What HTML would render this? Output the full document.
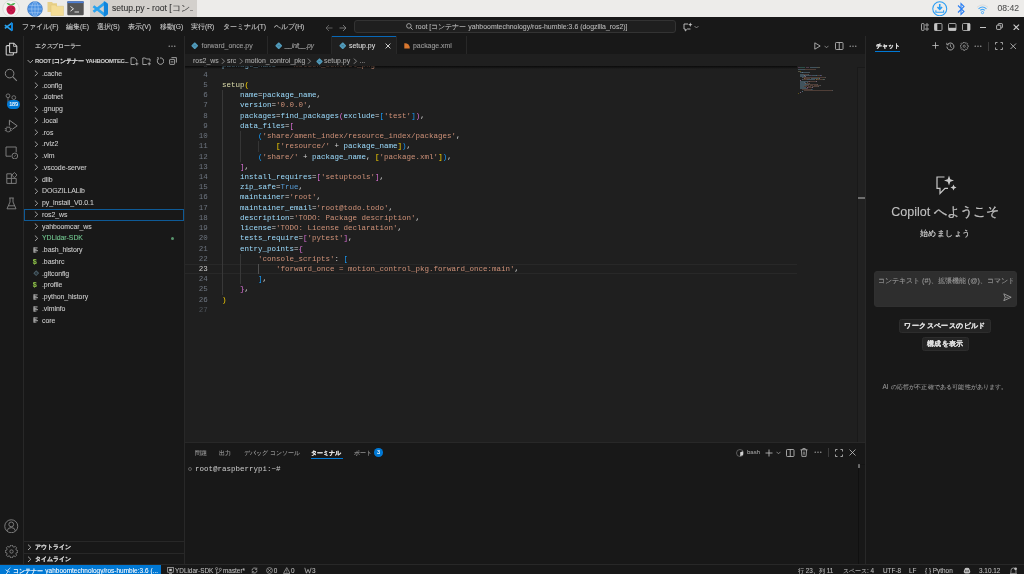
<!DOCTYPE html>
<html lang="ja"><head><meta charset="utf-8"><title>setup.py</title>
<style>
*{margin:0;padding:0;box-sizing:border-box}
html,body{width:1024px;height:574px;overflow:hidden;background:#181818;font-family:"Liberation Sans",sans-serif;color:#ccc}
.a{position:absolute}
.t{position:absolute;white-space:nowrap;-webkit-text-stroke:0.08px currentColor}
.m{position:absolute;white-space:pre;font-family:"Liberation Mono",monospace}
</style></head><body><div id="w" style="position:absolute;left:0;top:0;width:1024px;height:574px;will-change:transform">
<div class="a" style="left:0px;top:0px;width:1024px;height:17px;background:#edecea;"></div>
<div class="a" style="left:90px;top:0px;width:107px;height:17px;background:#d3d0cc;"></div>
<div class="a" style="left:0px;top:17px;width:1024px;height:18.5px;background:#181818;"></div>
<div class="a" style="left:0px;top:35.5px;width:1024px;height:0.8px;background:#282828;"></div>
<div class="a" style="left:0px;top:36px;width:23px;height:528px;background:#181818;"></div>
<div class="a" style="left:23px;top:36px;width:0.8px;height:528px;background:#282828;"></div>
<div class="a" style="left:23.8px;top:36px;width:160.5px;height:528px;background:#181818;"></div>
<div class="a" style="left:184.3px;top:36px;width:0.8px;height:528px;background:#282828;"></div>
<div class="a" style="left:185px;top:36px;width:680px;height:406px;background:#1f1f1f;"></div>
<div class="a" style="left:185px;top:36px;width:680px;height:18px;background:#181818;"></div>
<div class="a" style="left:185px;top:53.5px;width:680px;height:0.8px;background:#282828;"></div>
<div class="a" style="left:185px;top:54.3px;width:680px;height:11.2px;background:#1f1f1f;"></div>
<div class="a" style="left:865px;top:36px;width:159px;height:528px;background:#181818;"></div>
<div class="a" style="left:865px;top:36px;width:0.8px;height:528px;background:#282828;"></div>
<div class="a" style="left:185px;top:442px;width:680px;height:122px;background:#181818;"></div>
<div class="a" style="left:185px;top:442px;width:680px;height:0.8px;background:#282828;"></div>
<div class="a" style="left:0px;top:564px;width:1024px;height:10px;background:#181818;"></div>
<div class="a" style="left:0px;top:564px;width:1024px;height:0.8px;background:#282828;"></div>
<div class="a" style="left:0px;top:564.5px;width:161px;height:10px;background:#0078d4;"></div>
<svg class="a" style="left:1.5px;top:0px;" width="18" height="17" viewBox="0 0 18 17"><circle cx="9" cy="8.5" r="8.2" fill="#f2f2f0" stroke="#d0d0ce" stroke-width="0.6"/><path d="M4.6 3.2 Q6.8 2.4 8.9 4.6 Q11 2.4 13.4 3.2 Q12.4 5.6 9 5.8 Q5.6 5.6 4.6 3.2Z" fill="#4caf50"/><path d="M9 5.4 C12.6 5.4 13.8 7.6 13.4 10.2 C13 12.8 11 14.6 9 14.6 C7 14.6 5 12.8 4.6 10.2 C4.2 7.6 5.4 5.4 9 5.4Z" fill="#c8174a"/><path d="M6.4 8.2h1.4M10.2 8.2h1.4M8.3 10.4h1.4M6.4 12.2h1.2M10.4 12.2h1.2" stroke="#8e0d33" stroke-width="0.7"/></svg>
<svg class="a" style="left:27px;top:0.5px;" width="16" height="16" viewBox="0 0 16 16"><circle cx="8" cy="8" r="7.4" fill="#4a90e2"/><circle cx="8" cy="8" r="7.4" fill="none" stroke="#2f6fc0" stroke-width="0.6"/><path d="M0.8 8H15.2M8 0.6V15.4M2 4.3H14M2 11.7H14" stroke="#a9cdf5" stroke-width="0.6" fill="none"/><ellipse cx="8" cy="8" rx="3.3" ry="7.4" fill="none" stroke="#a9cdf5" stroke-width="0.6"/></svg>
<svg class="a" style="left:47px;top:1px;" width="17" height="15" viewBox="0 0 17 15"><path d="M0.5 1H5L6 2.2H10V11H0.5Z" fill="#e8d089"/><path d="M4 4H8.6L9.6 5.2H16.5V14.5H4Z" fill="#f4dd96" stroke="#d9bf6e" stroke-width="0.4"/></svg>
<svg class="a" style="left:67px;top:1px;" width="17" height="14.5" viewBox="0 0 17 14.5"><rect x="0.3" y="0.3" width="16.4" height="13.9" rx="1" fill="#555"/><rect x="0.3" y="0.3" width="16.4" height="1.8" fill="#4d7fd6"/><path d="M3.5 5.5L6.5 7.8L3.5 10.1M7.5 11H12" stroke="#eee" stroke-width="0.9" fill="none"/></svg>
<svg class="a" style="left:92px;top:0.5px;" width="16" height="16" viewBox="0 0 100 100"><path d="M86 9L9 67M86 91L9 33" stroke="#2aa3ef" stroke-width="17"/><path d="M74 2L93 11Q100 14 100 22V78Q100 86 93 89L74 98Z" fill="#1185dc"/></svg>
<div class="t" style="left:112px;top:2.48px;height:12.04px;line-height:12.04px;font-size:8.6px;color:#333333;">setup.py - root [コン<span style="font-size:5px;letter-spacing:-0.3px">...</span></div>
<svg class="a" style="left:932px;top:0.5px;" width="15.5" height="15.5" viewBox="0 0 16 16"><circle cx="8" cy="8" r="7.2" fill="none" stroke="#2a9df4" stroke-width="1.1"/><path d="M8 3.2V8.4M5.6 6.2L8 8.6L10.4 6.2" stroke="#2a9df4" stroke-width="1.6" fill="none"/><path d="M4 9.6V11.6H12V9.6" stroke="#2a9df4" stroke-width="1.1" fill="none"/></svg>
<svg class="a" style="left:956px;top:0.5px;" width="10" height="16" viewBox="0 0 10 16"><path d="M2 4.5L8 10.5L5 13.5V2.5L8 5.5L2 11.5" stroke="#2a7ff4" stroke-width="1.1" fill="none" stroke-linejoin="miter"/></svg>
<svg class="a" style="left:975px;top:1px;" width="15" height="15" viewBox="0 0 15 15"><path d="M2 6.3Q7.5 1.5 13 6.3" stroke="#dcdcdc" stroke-width="1" fill="none"/><path d="M3.5 7.8Q7.5 4.2 11.5 7.8" stroke="#4aaaf8" stroke-width="1.1" fill="none"/><path d="M5.2 9.4Q7.5 7.4 9.8 9.4" stroke="#4aaaf8" stroke-width="1.1" fill="none"/><circle cx="7.5" cy="11.6" r="1.1" fill="none" stroke="#4aaaf8" stroke-width="1"/></svg>
<div class="t" style="left:997.5px;top:2.28px;height:12.04px;line-height:12.04px;font-size:8.6px;color:#505050;">08:42</div>
<svg class="a" style="left:3.5px;top:22px;" width="9.5" height="9.5" viewBox="0 0 100 100"><path d="M86 9L9 67M86 91L9 33" stroke="#2aa3ef" stroke-width="17"/><path d="M74 2L93 11Q100 14 100 22V78Q100 86 93 89L74 98Z" fill="#1185dc"/></svg>
<div class="t" style="left:22px;top:21.98px;height:9.45px;line-height:9.45px;font-size:6.75px;color:#cccccc;">ファイル(F)</div>
<div class="t" style="left:66px;top:21.98px;height:9.45px;line-height:9.45px;font-size:6.75px;color:#cccccc;">編集(E)</div>
<div class="t" style="left:96.7px;top:21.98px;height:9.45px;line-height:9.45px;font-size:6.75px;color:#cccccc;">選択(S)</div>
<div class="t" style="left:128px;top:21.98px;height:9.45px;line-height:9.45px;font-size:6.75px;color:#cccccc;">表示(V)</div>
<div class="t" style="left:159.5px;top:21.98px;height:9.45px;line-height:9.45px;font-size:6.75px;color:#cccccc;">移動(G)</div>
<div class="t" style="left:191px;top:21.98px;height:9.45px;line-height:9.45px;font-size:6.75px;color:#cccccc;">実行(R)</div>
<div class="t" style="left:222.5px;top:21.98px;height:9.45px;line-height:9.45px;font-size:6.75px;color:#cccccc;">ターミナル(T)</div>
<div class="t" style="left:274px;top:21.98px;height:9.45px;line-height:9.45px;font-size:6.75px;color:#cccccc;">ヘルプ(H)</div>
<svg class="a" style="left:324.5px;top:23.5px;" width="8" height="8" viewBox="0 0 8 8"><path d="M7.5 4H1M4 1L1 4L4 7" stroke="#6f6f6f" stroke-width="0.8" fill="none"/></svg>
<svg class="a" style="left:339px;top:23.5px;" width="8" height="8" viewBox="0 0 8 8"><path d="M0.5 4H7M4 1L7 4L4 7" stroke="#8a8a8a" stroke-width="0.8" fill="none"/></svg>
<div class="a" style="left:354px;top:20px;width:322px;height:13px;background:#1f1f1f;border:0.8px solid #333;border-radius:3px"></div>
<svg class="a" style="left:405.5px;top:23.3px;" width="7" height="7" viewBox="0 0 7 7"><circle cx="2.9" cy="2.9" r="2.3" fill="none" stroke="#bbb" stroke-width="0.8"/><path d="M4.5 4.5L6.6 6.6" stroke="#bbb" stroke-width="0.9"/></svg>
<div class="t" style="left:415.5px;top:21.95px;height:9.70px;line-height:9.70px;font-size:6.93px;color:#b8b8b8;">root [コンテナー yahboomtechnology/ros-humble:3.6 (dogzilla_ros2)]</div>
<svg class="a" style="left:682.5px;top:22px;" width="10" height="10" viewBox="0 0 10 10"><path d="M1 2H5M1 2V7H2.3V9L4.4 7H7.5" stroke="#c5c5c5" stroke-width="0.9" fill="none"/><path d="M7.3 0.5L7.9 2.1L9.5 2.7L7.9 3.3L7.3 4.9L6.7 3.3L5.1 2.7L6.7 2.1Z" fill="#c5c5c5"/></svg>
<svg class="a" style="left:693.8px;top:24.6px;" width="5" height="4" viewBox="0 0 5 4"><path d="M0.5 1L2.5 3L4.5 1" stroke="#aaa" stroke-width="0.7" fill="none"/></svg>
<svg class="a" style="left:920.5px;top:23px;" width="8" height="8" viewBox="0 0 8 8"><rect x="0.5" y="0.6" width="2.6" height="6.8" rx="0.6" fill="none" stroke="#c5c5c5" stroke-width="0.8"/><circle cx="6" cy="2" r="1.2" fill="none" stroke="#c5c5c5" stroke-width="0.8"/><circle cx="6" cy="6" r="1.2" fill="none" stroke="#c5c5c5" stroke-width="0.8"/></svg>
<svg class="a" style="left:934px;top:23px;" width="8.5" height="8" viewBox="0 0 8.5 8"><rect x="0.5" y="0.5" width="7.5" height="7" rx="1" fill="none" stroke="#c5c5c5" stroke-width="0.8"/><rect x="0.5" y="0.5" width="2.8" height="7" fill="#c5c5c5"/></svg>
<svg class="a" style="left:948px;top:23px;" width="8.5" height="8" viewBox="0 0 8.5 8"><rect x="0.5" y="0.5" width="7.5" height="7" rx="1" fill="none" stroke="#c5c5c5" stroke-width="0.8"/><rect x="0.5" y="4.8" width="7.5" height="2.7" fill="#c5c5c5"/></svg>
<svg class="a" style="left:962px;top:23px;" width="8.5" height="8" viewBox="0 0 8.5 8"><rect x="0.5" y="0.5" width="7.5" height="7" rx="1" fill="none" stroke="#c5c5c5" stroke-width="0.8"/><rect x="5.2" y="0.5" width="2.8" height="7" fill="#c5c5c5"/></svg>
<div class="a" style="left:979.5px;top:27.3px;width:6.5px;height:1.1px;background:#c5c5c5;"></div>
<svg class="a" style="left:996px;top:22.8px;" width="7" height="7" viewBox="0 0 7 7"><rect x="0.6" y="2.2" width="4.2" height="4.2" rx="0.6" fill="none" stroke="#c5c5c5" stroke-width="0.9"/><path d="M2.2 2.2V1.2Q2.2 0.6 2.8 0.6H5.8Q6.4 0.6 6.4 1.2V4.2Q6.4 4.8 5.8 4.8H4.8" fill="none" stroke="#c5c5c5" stroke-width="0.9"/></svg>
<svg class="a" style="left:1013.3px;top:23.6px;" width="6.6" height="6.6" viewBox="0 0 6.6 6.6"><path d="M0.6 0.6L6 6M6 0.6L0.6 6" stroke="#d0d0d0" stroke-width="1.05"/></svg>
<svg class="a" style="left:4.5px;top:41.8px;" width="13" height="14" viewBox="0 0 13 14"><path d="M4.6 1.2H8.8L11.8 4.2V10.2Q11.8 10.8 11.2 10.8H5.2Q4.6 10.8 4.6 10.2Z" fill="none" stroke="#d0d0d0" stroke-width="1.05"/><path d="M4.6 3.6H2.2Q1.2 3.6 1.2 4.6V12.2Q1.2 13 2 13H7.6Q8.4 13 8.4 12.2V10.8" fill="none" stroke="#d0d0d0" stroke-width="1.05"/><path d="M8.6 1.2V4.4H11.8" fill="none" stroke="#d0d0d0" stroke-width="0.8"/></svg>
<svg class="a" style="left:4px;top:67.5px;" width="14" height="14" viewBox="0 0 14 14"><circle cx="5.6" cy="5.6" r="4.3" fill="none" stroke="#868686" stroke-width="1"/><path d="M8.7 8.7L12.8 12.8" stroke="#868686" stroke-width="1.1"/></svg>
<svg class="a" style="left:5px;top:93px;" width="12" height="14" viewBox="0 0 12 14"><circle cx="3" cy="2.8" r="1.9" fill="none" stroke="#868686" stroke-width="0.8"/><circle cx="8.8" cy="4.6" r="1.9" fill="none" stroke="#868686" stroke-width="0.8"/><path d="M3 4.7V12" stroke="#868686" stroke-width="0.8"/></svg>
<div class="a" style="left:6.8px;top:99.8px;width:13.2px;height:9.4px;background:#0078d4;border-radius:5px"></div>
<div class="t" style="left:7px;top:100.58px;height:7.84px;line-height:7.84px;font-size:5.6px;color:#ffffff;width:13px;text-align:center;letter-spacing:-0.2px">189</div>
<svg class="a" style="left:4px;top:119px;" width="14" height="14" viewBox="0 0 14 14"><path d="M5.4 6.4V1.2L13.2 6.8L8.2 10.4" fill="none" stroke="#868686" stroke-width="1"/><g stroke="#868686" stroke-width="0.8" fill="none"><rect x="2.2" y="8.2" width="4.2" height="4.6" rx="1.6"/><path d="M0.8 9.6H2.2M0.8 11.6H2.2M6.4 9.6H7.8M6.4 11.6H7.8M3 7.6L3.6 8.2M5.6 7.6L5 8.2"/></g></svg>
<svg class="a" style="left:4.5px;top:145.5px;" width="13.5" height="13.5" viewBox="0 0 13.5 13.5"><path d="M11.2 6.3V1H1V10.2H6" fill="none" stroke="#868686" stroke-width="0.9"/><circle cx="9.8" cy="10" r="2.9" fill="none" stroke="#868686" stroke-width="0.9"/><path d="M8.8 11L11 8.9" stroke="#868686" stroke-width="0.6"/></svg>
<svg class="a" style="left:5.5px;top:171.5px;" width="12" height="12.5" viewBox="0 0 12 12.5"><path d="M0.8 1.8H5.4V6.4H10.2V11.4H0.8Z M0.8 6.4H5.4V11.4" fill="none" stroke="#868686" stroke-width="0.9"/><path d="M8.4 0.5L11 3.1L8.4 5.7L5.8 3.1Z" fill="none" stroke="#868686" stroke-width="0.9"/></svg>
<svg class="a" style="left:5.5px;top:196.5px;" width="11" height="13" viewBox="0 0 11 13"><path d="M3.2 1H7.8M4 1V5L1 11.8H10L7 5V1" fill="none" stroke="#868686" stroke-width="0.9"/><path d="M2.4 8.8H8.6" stroke="#868686" stroke-width="0.9"/></svg>
<svg class="a" style="left:4px;top:518.5px;" width="14.5" height="14.5" viewBox="0 0 14.5 14.5"><circle cx="7.25" cy="7.25" r="6.5" fill="none" stroke="#868686" stroke-width="0.9"/><circle cx="7.25" cy="5.4" r="2.4" fill="none" stroke="#868686" stroke-width="0.9"/><path d="M3.2 11.8Q3.6 8.6 7.25 8.6Q10.9 8.6 11.3 11.8" fill="none" stroke="#868686" stroke-width="0.9"/></svg>
<svg class="a" style="left:4.6px;top:545px;" width="13" height="13" viewBox="0 0 14 14"><g fill="none" stroke="#868686" stroke-width="0.9"><circle cx="7" cy="7" r="1.8"/><path d="M6 0.9H8L8.4 2.5L9.6 3.1L11.1 2.3L12.5 3.7L11.7 5.2L12.2 6.4L13.8 6.8V8.8L12.2 9.2L11.7 10.4L12.5 11.9L11.1 13.3L9.6 12.5L8.4 13.1L8 14.7H6L5.6 13.1L4.4 12.5L2.9 13.3L1.5 11.9L2.3 10.4L1.8 9.2L0.2 8.8V6.8L1.8 6.4L2.3 5.2L1.5 3.7L2.9 2.3L4.4 3.1L5.6 2.5Z" transform="translate(0,-0.8)"/></g></svg>
<div class="t" style="left:35px;top:41.87px;height:8.26px;line-height:8.26px;font-size:5.9px;color:#cccccc;letter-spacing:-0.25px;-webkit-text-stroke:0.15px #ccc">エクスプローラー</div>
<svg class="a" style="left:167.5px;top:44.8px;" width="8" height="2.5" viewBox="0 0 8 2.5"><circle cx="1.2" cy="1.2" r="0.6" fill="#ccc"/><circle cx="4" cy="1.2" r="0.6" fill="#ccc"/><circle cx="6.8" cy="1.2" r="0.6" fill="#ccc"/></svg>
<svg class="a" style="left:26.6px;top:58.6px;" width="6.6" height="5" viewBox="0 0 6.6 5"><path d="M0.6 1L3.3 3.8L6 1" stroke="#c5c5c5" stroke-width="0.8" fill="none"/></svg>
<div class="t" style="left:35px;top:56.87px;height:8.26px;line-height:8.26px;font-size:5.9px;color:#cccccc;font-weight:bold"><span style="letter-spacing:-0.3px">ROOT [</span><span style="-webkit-text-stroke:0.15px #ccc">コンテナー</span> <span style="letter-spacing:-0.3px">YAHBOOMTEC</span><span style="letter-spacing:-0.4px">...</span></div>
<svg class="a" style="left:130px;top:57px;" width="9" height="8.5" viewBox="0 0 9 8.5"><path d="M4.8 7.5H1V0.8H4.6L6.8 3V4.6" fill="none" stroke="#c5c5c5" stroke-width="0.75"/><path d="M6.8 5.2V8.4M5.2 6.8H8.4" stroke="#c5c5c5" stroke-width="0.75"/></svg>
<svg class="a" style="left:142px;top:57px;" width="9.5" height="8.5" viewBox="0 0 9.5 8.5"><path d="M4.8 7.5H0.8V1H3.4L4.2 2H8V4.6" fill="none" stroke="#c5c5c5" stroke-width="0.75"/><path d="M7.2 5.2V8.4M5.6 6.8H8.8" stroke="#c5c5c5" stroke-width="0.75"/></svg>
<svg class="a" style="left:155.5px;top:57px;" width="8" height="8" viewBox="0 0 8 8"><path d="M2 2.2A3.2 3.2 0 1 0 4 1" fill="none" stroke="#c5c5c5" stroke-width="0.8"/><path d="M1 0.6H2.4V2.2H0.8" fill="none" stroke="#c5c5c5" stroke-width="0.6"/></svg>
<svg class="a" style="left:168.5px;top:57px;" width="8" height="8" viewBox="0 0 8 8"><rect x="0.6" y="2.4" width="5" height="5" rx="0.6" fill="none" stroke="#c5c5c5" stroke-width="0.75"/><path d="M2.4 0.6H7.4V5.6" fill="none" stroke="#c5c5c5" stroke-width="0.75"/><path d="M1.8 4.9H4.4" stroke="#c5c5c5" stroke-width="0.75"/></svg>
<div class="a" style="left:24px;top:209.0px;width:160px;height:11.6px;background:transparent;border:0.8px solid #0e5a96"></div>
<svg class="a" style="left:34px;top:70.3px;" width="5" height="6.6" viewBox="0 0 5 6.6"><path d="M1.1 0.8L3.7 3.3L1.1 5.8" stroke="#b8b8b8" stroke-width="0.85" fill="none" stroke-linejoin="round" stroke-linecap="round"/></svg>
<div class="t" style="left:42px;top:68.75px;height:9.70px;line-height:9.70px;font-size:6.93px;color:#cccccc;letter-spacing:-0.06px">.cache</div>
<svg class="a" style="left:34px;top:82.05px;" width="5" height="6.6" viewBox="0 0 5 6.6"><path d="M1.1 0.8L3.7 3.3L1.1 5.8" stroke="#b8b8b8" stroke-width="0.85" fill="none" stroke-linejoin="round" stroke-linecap="round"/></svg>
<div class="t" style="left:42px;top:80.50px;height:9.70px;line-height:9.70px;font-size:6.93px;color:#cccccc;letter-spacing:-0.06px">.config</div>
<svg class="a" style="left:34px;top:93.8px;" width="5" height="6.6" viewBox="0 0 5 6.6"><path d="M1.1 0.8L3.7 3.3L1.1 5.8" stroke="#b8b8b8" stroke-width="0.85" fill="none" stroke-linejoin="round" stroke-linecap="round"/></svg>
<div class="t" style="left:42px;top:92.25px;height:9.70px;line-height:9.70px;font-size:6.93px;color:#cccccc;letter-spacing:-0.06px">.dotnet</div>
<svg class="a" style="left:34px;top:105.55px;" width="5" height="6.6" viewBox="0 0 5 6.6"><path d="M1.1 0.8L3.7 3.3L1.1 5.8" stroke="#b8b8b8" stroke-width="0.85" fill="none" stroke-linejoin="round" stroke-linecap="round"/></svg>
<div class="t" style="left:42px;top:104.00px;height:9.70px;line-height:9.70px;font-size:6.93px;color:#cccccc;letter-spacing:-0.06px">.gnupg</div>
<svg class="a" style="left:34px;top:117.3px;" width="5" height="6.6" viewBox="0 0 5 6.6"><path d="M1.1 0.8L3.7 3.3L1.1 5.8" stroke="#b8b8b8" stroke-width="0.85" fill="none" stroke-linejoin="round" stroke-linecap="round"/></svg>
<div class="t" style="left:42px;top:115.75px;height:9.70px;line-height:9.70px;font-size:6.93px;color:#cccccc;letter-spacing:-0.06px">.local</div>
<svg class="a" style="left:34px;top:129.04999999999998px;" width="5" height="6.6" viewBox="0 0 5 6.6"><path d="M1.1 0.8L3.7 3.3L1.1 5.8" stroke="#b8b8b8" stroke-width="0.85" fill="none" stroke-linejoin="round" stroke-linecap="round"/></svg>
<div class="t" style="left:42px;top:127.50px;height:9.70px;line-height:9.70px;font-size:6.93px;color:#cccccc;letter-spacing:-0.06px">.ros</div>
<svg class="a" style="left:34px;top:140.79999999999998px;" width="5" height="6.6" viewBox="0 0 5 6.6"><path d="M1.1 0.8L3.7 3.3L1.1 5.8" stroke="#b8b8b8" stroke-width="0.85" fill="none" stroke-linejoin="round" stroke-linecap="round"/></svg>
<div class="t" style="left:42px;top:139.25px;height:9.70px;line-height:9.70px;font-size:6.93px;color:#cccccc;letter-spacing:-0.06px">.rviz2</div>
<svg class="a" style="left:34px;top:152.54999999999998px;" width="5" height="6.6" viewBox="0 0 5 6.6"><path d="M1.1 0.8L3.7 3.3L1.1 5.8" stroke="#b8b8b8" stroke-width="0.85" fill="none" stroke-linejoin="round" stroke-linecap="round"/></svg>
<div class="t" style="left:42px;top:151.00px;height:9.70px;line-height:9.70px;font-size:6.93px;color:#cccccc;letter-spacing:-0.06px">.vim</div>
<svg class="a" style="left:34px;top:164.29999999999998px;" width="5" height="6.6" viewBox="0 0 5 6.6"><path d="M1.1 0.8L3.7 3.3L1.1 5.8" stroke="#b8b8b8" stroke-width="0.85" fill="none" stroke-linejoin="round" stroke-linecap="round"/></svg>
<div class="t" style="left:42px;top:162.75px;height:9.70px;line-height:9.70px;font-size:6.93px;color:#cccccc;letter-spacing:-0.06px">.vscode-server</div>
<svg class="a" style="left:34px;top:176.04999999999998px;" width="5" height="6.6" viewBox="0 0 5 6.6"><path d="M1.1 0.8L3.7 3.3L1.1 5.8" stroke="#b8b8b8" stroke-width="0.85" fill="none" stroke-linejoin="round" stroke-linecap="round"/></svg>
<div class="t" style="left:42px;top:174.50px;height:9.70px;line-height:9.70px;font-size:6.93px;color:#cccccc;letter-spacing:-0.06px">dlib</div>
<svg class="a" style="left:34px;top:187.79999999999998px;" width="5" height="6.6" viewBox="0 0 5 6.6"><path d="M1.1 0.8L3.7 3.3L1.1 5.8" stroke="#b8b8b8" stroke-width="0.85" fill="none" stroke-linejoin="round" stroke-linecap="round"/></svg>
<div class="t" style="left:42px;top:186.25px;height:9.70px;line-height:9.70px;font-size:6.93px;color:#cccccc;letter-spacing:-0.06px">DOGZILLALib</div>
<svg class="a" style="left:34px;top:199.54999999999998px;" width="5" height="6.6" viewBox="0 0 5 6.6"><path d="M1.1 0.8L3.7 3.3L1.1 5.8" stroke="#b8b8b8" stroke-width="0.85" fill="none" stroke-linejoin="round" stroke-linecap="round"/></svg>
<div class="t" style="left:42px;top:198.00px;height:9.70px;line-height:9.70px;font-size:6.93px;color:#cccccc;letter-spacing:-0.06px">py_install_V0.0.1</div>
<svg class="a" style="left:34px;top:211.29999999999998px;" width="5" height="6.6" viewBox="0 0 5 6.6"><path d="M1.1 0.8L3.7 3.3L1.1 5.8" stroke="#b8b8b8" stroke-width="0.85" fill="none" stroke-linejoin="round" stroke-linecap="round"/></svg>
<div class="t" style="left:42px;top:209.75px;height:9.70px;line-height:9.70px;font-size:6.93px;color:#cccccc;letter-spacing:-0.06px">ros2_ws</div>
<svg class="a" style="left:34px;top:223.04999999999998px;" width="5" height="6.6" viewBox="0 0 5 6.6"><path d="M1.1 0.8L3.7 3.3L1.1 5.8" stroke="#b8b8b8" stroke-width="0.85" fill="none" stroke-linejoin="round" stroke-linecap="round"/></svg>
<div class="t" style="left:42px;top:221.50px;height:9.70px;line-height:9.70px;font-size:6.93px;color:#cccccc;letter-spacing:-0.06px">yahboomcar_ws</div>
<svg class="a" style="left:34px;top:234.79999999999998px;" width="5" height="6.6" viewBox="0 0 5 6.6"><path d="M1.1 0.8L3.7 3.3L1.1 5.8" stroke="#b8b8b8" stroke-width="0.85" fill="none" stroke-linejoin="round" stroke-linecap="round"/></svg>
<div class="t" style="left:42px;top:233.25px;height:9.70px;line-height:9.70px;font-size:6.93px;color:#73c991;letter-spacing:-0.06px">YDLidar-SDK</div>
<div class="a" style="left:170.6px;top:236.6px;width:3.1px;height:3.1px;background:#73c991;border-radius:50%;opacity:0.7"></div>
<svg class="a" style="left:33.2px;top:246.85px;" width="5.6" height="6" viewBox="0 0 5.6 6"><path d="M0.6 0.9H4.6M0.6 2.3H3.6M0.6 3.7H5M0.6 5.1H3.4" stroke="#a8a8a8" stroke-width="1"/><path d="M1.1 0.4V5.6" stroke="#a8a8a8" stroke-width="1.2"/></svg>
<div class="t" style="left:42px;top:245.00px;height:9.70px;line-height:9.70px;font-size:6.93px;color:#cccccc;letter-spacing:-0.06px">.bash_history</div>
<div class="t" style="left:32.8px;top:256.86px;height:10.08px;line-height:10.08px;font-size:7.2px;color:#8dc149;font-weight:bold">$</div>
<div class="t" style="left:42px;top:256.75px;height:9.70px;line-height:9.70px;font-size:6.93px;color:#cccccc;letter-spacing:-0.06px">.bashrc</div>
<svg class="a" style="left:32.5px;top:270.15000000000003px;" width="6.4" height="6.4" viewBox="0 0 6.4 6.4"><path d="M3.2 0.3L6.1 3.2L3.2 6.1L0.3 3.2Z" fill="#4d616b"/><path d="M3.2 1.5L4.9 3.2L3.2 4.9L1.5 3.2Z" fill="#2a363c"/></svg>
<div class="t" style="left:42px;top:268.50px;height:9.70px;line-height:9.70px;font-size:6.93px;color:#cccccc;letter-spacing:-0.06px">.gitconfig</div>
<div class="t" style="left:32.8px;top:280.36px;height:10.08px;line-height:10.08px;font-size:7.2px;color:#8dc149;font-weight:bold">$</div>
<div class="t" style="left:42px;top:280.25px;height:9.70px;line-height:9.70px;font-size:6.93px;color:#cccccc;letter-spacing:-0.06px">.profile</div>
<svg class="a" style="left:33.2px;top:293.85px;" width="5.6" height="6" viewBox="0 0 5.6 6"><path d="M0.6 0.9H4.6M0.6 2.3H3.6M0.6 3.7H5M0.6 5.1H3.4" stroke="#a8a8a8" stroke-width="1"/><path d="M1.1 0.4V5.6" stroke="#a8a8a8" stroke-width="1.2"/></svg>
<div class="t" style="left:42px;top:292.00px;height:9.70px;line-height:9.70px;font-size:6.93px;color:#cccccc;letter-spacing:-0.06px">.python_history</div>
<svg class="a" style="left:33.2px;top:305.6px;" width="5.6" height="6" viewBox="0 0 5.6 6"><path d="M0.6 0.9H4.6M0.6 2.3H3.6M0.6 3.7H5M0.6 5.1H3.4" stroke="#a8a8a8" stroke-width="1"/><path d="M1.1 0.4V5.6" stroke="#a8a8a8" stroke-width="1.2"/></svg>
<div class="t" style="left:42px;top:303.75px;height:9.70px;line-height:9.70px;font-size:6.93px;color:#cccccc;letter-spacing:-0.06px">.viminfo</div>
<svg class="a" style="left:33.2px;top:317.35px;" width="5.6" height="6" viewBox="0 0 5.6 6"><path d="M0.6 0.9H4.6M0.6 2.3H3.6M0.6 3.7H5M0.6 5.1H3.4" stroke="#a8a8a8" stroke-width="1"/><path d="M1.1 0.4V5.6" stroke="#a8a8a8" stroke-width="1.2"/></svg>
<div class="t" style="left:42px;top:315.50px;height:9.70px;line-height:9.70px;font-size:6.93px;color:#cccccc;letter-spacing:-0.06px">core</div>
<div class="a" style="left:23.8px;top:541.3px;width:160.5px;height:0.8px;background:#282828;"></div>
<div class="a" style="left:23.8px;top:552.6px;width:160.5px;height:0.8px;background:#282828;"></div>
<svg class="a" style="left:27px;top:544.0px;" width="5" height="6.6" viewBox="0 0 5 6.6"><path d="M1 0.6L3.8 3.3L1 6" stroke="#c5c5c5" stroke-width="0.8" fill="none"/></svg>
<div class="t" style="left:35px;top:543.17px;height:8.26px;line-height:8.26px;font-size:5.9px;color:#cccccc;font-weight:bold;-webkit-text-stroke:0.15px #ccc">アウトライン</div>
<svg class="a" style="left:27px;top:555.7px;" width="5" height="6.6" viewBox="0 0 5 6.6"><path d="M1 0.6L3.8 3.3L1 6" stroke="#c5c5c5" stroke-width="0.8" fill="none"/></svg>
<div class="t" style="left:35px;top:554.87px;height:8.26px;line-height:8.26px;font-size:5.9px;color:#cccccc;font-weight:bold;-webkit-text-stroke:0.15px #ccc">タイムライン</div>
<div class="a" style="left:267.20000000000005px;top:36px;width:0.8px;height:18px;background:#282828;"></div>
<svg class="a" style="left:191px;top:42px;" width="7.5" height="7.5" viewBox="0 0 8 8"><path d="M4 1.1L6.9 4L4 6.9L1.1 4Z" fill="#519aba" stroke="#519aba" stroke-width="1.3" stroke-linejoin="round"/><path d="M2.8 4H5.2" stroke="#2f5d70" stroke-width="0.5"/></svg>
<div class="t" style="left:201.5px;top:40.85px;height:9.70px;line-height:9.70px;font-size:6.93px;color:#9d9d9d;letter-spacing:0px;">forward_once.py</div>
<div class="a" style="left:331.1px;top:36px;width:0.8px;height:18px;background:#282828;"></div>
<svg class="a" style="left:274.5px;top:42px;" width="7.5" height="7.5" viewBox="0 0 8 8"><path d="M4 1.1L6.9 4L4 6.9L1.1 4Z" fill="#519aba" stroke="#519aba" stroke-width="1.3" stroke-linejoin="round"/><path d="M2.8 4H5.2" stroke="#2f5d70" stroke-width="0.5"/></svg>
<div class="t" style="left:285px;top:40.85px;height:9.70px;line-height:9.70px;font-size:6.93px;color:#9d9d9d;letter-spacing:-0.45px;font-style:italic">__init__.py</div>
<div class="a" style="left:331.5px;top:36px;width:64.5px;height:18px;background:#1f1f1f;"></div>
<div class="a" style="left:331.5px;top:36px;width:64.5px;height:0.9px;background:#0868b8;"></div>
<div class="a" style="left:395.6px;top:36px;width:0.8px;height:18px;background:#282828;"></div>
<svg class="a" style="left:338.5px;top:42px;" width="7.5" height="7.5" viewBox="0 0 8 8"><path d="M4 1.1L6.9 4L4 6.9L1.1 4Z" fill="#519aba" stroke="#519aba" stroke-width="1.3" stroke-linejoin="round"/><path d="M2.8 4H5.2" stroke="#2f5d70" stroke-width="0.5"/></svg>
<div class="t" style="left:349px;top:40.85px;height:9.70px;line-height:9.70px;font-size:6.93px;color:#dedede;letter-spacing:0px;">setup.py</div>
<svg class="a" style="left:384.5px;top:43px;" width="6" height="6" viewBox="0 0 6 6"><path d="M0.6 0.6L5.4 5.4M5.4 0.6L0.6 5.4" stroke="#e0e0e0" stroke-width="0.9"/></svg>
<div class="a" style="left:465.6px;top:36px;width:0.8px;height:18px;background:#282828;"></div>
<svg class="a" style="left:402.5px;top:42px;" width="7.5" height="7.5" viewBox="0 0 8 8"><path d="M1.4 1.2H2.2A5 5 0 0 1 7.2 6.2V7H1.4Z" fill="#d9772f"/></svg>
<div class="t" style="left:413px;top:40.85px;height:9.70px;line-height:9.70px;font-size:6.93px;color:#9d9d9d;letter-spacing:0px;">package.xml</div>
<div class="a" style="left:331.9px;top:53.5px;width:63.7px;height:0.8px;background:#1f1f1f;"></div>
<svg class="a" style="left:814px;top:42px;" width="7" height="8" viewBox="0 0 7 8"><path d="M0.8 0.8L6.2 4L0.8 7.2Z" fill="none" stroke="#c5c5c5" stroke-width="0.8"/></svg>
<svg class="a" style="left:823.5px;top:45px;" width="5" height="3.5" viewBox="0 0 5 3.5"><path d="M0.5 0.8L2.5 2.8L4.5 0.8" stroke="#aaa" stroke-width="0.7" fill="none"/></svg>
<svg class="a" style="left:835px;top:42px;" width="8.5" height="8" viewBox="0 0 8.5 8"><rect x="0.5" y="0.5" width="7.5" height="7" rx="0.8" fill="none" stroke="#c5c5c5" stroke-width="0.8"/><path d="M4.25 0.5V7.5" stroke="#c5c5c5" stroke-width="0.8"/></svg>
<svg class="a" style="left:848.5px;top:45px;" width="8" height="2.5" viewBox="0 0 8 2.5"><circle cx="1.2" cy="1.2" r="0.6" fill="#ccc"/><circle cx="4" cy="1.2" r="0.6" fill="#ccc"/><circle cx="6.8" cy="1.2" r="0.6" fill="#ccc"/></svg>
<div class="t" style="left:193px;top:56.15px;height:9.70px;line-height:9.70px;font-size:6.93px;color:#a9a9a9;">ros2_ws</div>
<svg class="a" style="left:221.2px;top:57.8px;" width="4.5" height="6.4" viewBox="0 0 4.5 6.4"><path d="M0.9 0.6L3.5 3.2L0.9 5.8" stroke="#a9a9a9" stroke-width="0.75" fill="none"/></svg>
<div class="t" style="left:227px;top:56.15px;height:9.70px;line-height:9.70px;font-size:6.93px;color:#a9a9a9;">src</div>
<svg class="a" style="left:239.2px;top:57.8px;" width="4.5" height="6.4" viewBox="0 0 4.5 6.4"><path d="M0.9 0.6L3.5 3.2L0.9 5.8" stroke="#a9a9a9" stroke-width="0.75" fill="none"/></svg>
<div class="t" style="left:245px;top:56.15px;height:9.70px;line-height:9.70px;font-size:6.93px;color:#a9a9a9;">motion_control_pkg</div>
<svg class="a" style="left:307.2px;top:57.8px;" width="4.5" height="6.4" viewBox="0 0 4.5 6.4"><path d="M0.9 0.6L3.5 3.2L0.9 5.8" stroke="#a9a9a9" stroke-width="0.75" fill="none"/></svg>
<svg class="a" style="left:315.5px;top:57.5px;" width="7" height="7" viewBox="0 0 8 8"><path d="M4 1.1L6.9 4L4 6.9L1.1 4Z" fill="#519aba" stroke="#519aba" stroke-width="1.3" stroke-linejoin="round"/><path d="M2.8 4H5.2" stroke="#2f5d70" stroke-width="0.5"/></svg>
<div class="t" style="left:324px;top:56.15px;height:9.70px;line-height:9.70px;font-size:6.93px;color:#a9a9a9;">setup.py</div>
<svg class="a" style="left:353.2px;top:57.8px;" width="4.5" height="6.4" viewBox="0 0 4.5 6.4"><path d="M0.9 0.6L3.5 3.2L0.9 5.8" stroke="#a9a9a9" stroke-width="0.75" fill="none"/></svg>
<div class="t" style="left:359.5px;top:56.15px;height:9.70px;line-height:9.70px;font-size:6.93px;color:#a9a9a9;">...</div>
<div class="a" style="left:185px;top:264.18000000000006px;width:612px;height:10px;background:transparent;border-top:0.8px solid #282828;border-bottom:0.8px solid #282828"></div>
<div class="a" style="left:222.0px;top:90.24000000000001px;width:0.8px;height:204.4px;background:#383838;"></div>
<div class="a" style="left:240.0px;top:131.12000000000003px;width:0.8px;height:30.660000000000004px;background:#353535;"></div>
<div class="a" style="left:240.0px;top:253.76000000000002px;width:0.8px;height:30.660000000000004px;background:#383838;"></div>
<div class="a" style="left:258.0px;top:141.34px;width:0.8px;height:10.22px;background:#353535;"></div>
<div class="a" style="left:258.0px;top:263.98px;width:0.8px;height:10.22px;background:#505050;"></div>
<div class="a" style="left:185px;top:65.5px;width:680px;height:376.5px;overflow:hidden">
<div class="m" style="left:0;width:22.80000000000001px;text-align:right;top:-5.93px;height:10.22px;line-height:10.22px;font-size:7.47px;color:#6e7681">3</div>
<div class="m" style="left:0;width:22.80000000000001px;text-align:right;top:4.29px;height:10.22px;line-height:10.22px;font-size:7.47px;color:#6e7681">4</div>
<div class="m" style="left:0;width:22.80000000000001px;text-align:right;top:14.51px;height:10.22px;line-height:10.22px;font-size:7.47px;color:#6e7681">5</div>
<div class="m" style="left:0;width:22.80000000000001px;text-align:right;top:24.73px;height:10.22px;line-height:10.22px;font-size:7.47px;color:#6e7681">6</div>
<div class="m" style="left:0;width:22.80000000000001px;text-align:right;top:34.95px;height:10.22px;line-height:10.22px;font-size:7.47px;color:#6e7681">7</div>
<div class="m" style="left:0;width:22.80000000000001px;text-align:right;top:45.17px;height:10.22px;line-height:10.22px;font-size:7.47px;color:#6e7681">8</div>
<div class="m" style="left:0;width:22.80000000000001px;text-align:right;top:55.39px;height:10.22px;line-height:10.22px;font-size:7.47px;color:#6e7681">9</div>
<div class="m" style="left:0;width:22.80000000000001px;text-align:right;top:65.61px;height:10.22px;line-height:10.22px;font-size:7.47px;color:#6e7681">10</div>
<div class="m" style="left:0;width:22.80000000000001px;text-align:right;top:75.83px;height:10.22px;line-height:10.22px;font-size:7.47px;color:#6e7681">11</div>
<div class="m" style="left:0;width:22.80000000000001px;text-align:right;top:86.05px;height:10.22px;line-height:10.22px;font-size:7.47px;color:#6e7681">12</div>
<div class="m" style="left:0;width:22.80000000000001px;text-align:right;top:96.27px;height:10.22px;line-height:10.22px;font-size:7.47px;color:#6e7681">13</div>
<div class="m" style="left:0;width:22.80000000000001px;text-align:right;top:106.49px;height:10.22px;line-height:10.22px;font-size:7.47px;color:#6e7681">14</div>
<div class="m" style="left:0;width:22.80000000000001px;text-align:right;top:116.71px;height:10.22px;line-height:10.22px;font-size:7.47px;color:#6e7681">15</div>
<div class="m" style="left:0;width:22.80000000000001px;text-align:right;top:126.93px;height:10.22px;line-height:10.22px;font-size:7.47px;color:#6e7681">16</div>
<div class="m" style="left:0;width:22.80000000000001px;text-align:right;top:137.15px;height:10.22px;line-height:10.22px;font-size:7.47px;color:#6e7681">17</div>
<div class="m" style="left:0;width:22.80000000000001px;text-align:right;top:147.37px;height:10.22px;line-height:10.22px;font-size:7.47px;color:#6e7681">18</div>
<div class="m" style="left:0;width:22.80000000000001px;text-align:right;top:157.59px;height:10.22px;line-height:10.22px;font-size:7.47px;color:#6e7681">19</div>
<div class="m" style="left:0;width:22.80000000000001px;text-align:right;top:167.81px;height:10.22px;line-height:10.22px;font-size:7.47px;color:#6e7681">20</div>
<div class="m" style="left:0;width:22.80000000000001px;text-align:right;top:178.03px;height:10.22px;line-height:10.22px;font-size:7.47px;color:#6e7681">21</div>
<div class="m" style="left:0;width:22.80000000000001px;text-align:right;top:188.25px;height:10.22px;line-height:10.22px;font-size:7.47px;color:#6e7681">22</div>
<div class="m" style="left:0;width:22.80000000000001px;text-align:right;top:198.47px;height:10.22px;line-height:10.22px;font-size:7.47px;color:#cccccc">23</div>
<div class="m" style="left:0;width:22.80000000000001px;text-align:right;top:208.69px;height:10.22px;line-height:10.22px;font-size:7.47px;color:#6e7681">24</div>
<div class="m" style="left:0;width:22.80000000000001px;text-align:right;top:218.91px;height:10.22px;line-height:10.22px;font-size:7.47px;color:#6e7681">25</div>
<div class="m" style="left:0;width:22.80000000000001px;text-align:right;top:229.13px;height:10.22px;line-height:10.22px;font-size:7.47px;color:#6e7681">26</div>
<div class="m" style="left:0;width:22.80000000000001px;text-align:right;top:239.35px;height:10.22px;line-height:10.22px;font-size:7.47px;color:#4d535a">27</div>
<div class="m" style="left:37.0px;top:-5.93px;height:10.22px;line-height:10.22px;font-size:7.5px"><span style="color:#9cdcfe">package_name</span><span style="color:#d4d4d4"> = </span><span style="color:#ce9178">'motion_control_pkg'</span></div>
<div class="m" style="left:37.0px;top:4.29px;height:10.22px;line-height:10.22px;font-size:7.5px"></div>
<div class="m" style="left:37.0px;top:14.51px;height:10.22px;line-height:10.22px;font-size:7.5px"><span style="color:#dcdcaa">setup</span><span style="color:#ffd700">(</span></div>
<div class="m" style="left:37.0px;top:24.73px;height:10.22px;line-height:10.22px;font-size:7.5px"><span style="color:#9cdcfe">    name</span><span style="color:#d4d4d4">=</span><span style="color:#9cdcfe">package_name</span><span style="color:#d4d4d4">,</span></div>
<div class="m" style="left:37.0px;top:34.95px;height:10.22px;line-height:10.22px;font-size:7.5px"><span style="color:#9cdcfe">    version</span><span style="color:#d4d4d4">=</span><span style="color:#ce9178">'0.0.0'</span><span style="color:#d4d4d4">,</span></div>
<div class="m" style="left:37.0px;top:45.17px;height:10.22px;line-height:10.22px;font-size:7.5px"><span style="color:#9cdcfe">    packages</span><span style="color:#d4d4d4">=</span><span style="color:#9cdcfe">find_packages</span><span style="color:#da70d6">(</span><span style="color:#9cdcfe">exclude</span><span style="color:#d4d4d4">=</span><span style="color:#179fff">[</span><span style="color:#ce9178">'test'</span><span style="color:#179fff">]</span><span style="color:#da70d6">)</span><span style="color:#d4d4d4">,</span></div>
<div class="m" style="left:37.0px;top:55.39px;height:10.22px;line-height:10.22px;font-size:7.5px"><span style="color:#9cdcfe">    data_files</span><span style="color:#d4d4d4">=</span><span style="color:#da70d6">[</span></div>
<div class="m" style="left:37.0px;top:65.61px;height:10.22px;line-height:10.22px;font-size:7.5px"><span style="color:#d4d4d4">        </span><span style="color:#179fff">(</span><span style="color:#ce9178">'share/ament_index/resource_index/packages'</span><span style="color:#d4d4d4">,</span></div>
<div class="m" style="left:37.0px;top:75.83px;height:10.22px;line-height:10.22px;font-size:7.5px"><span style="color:#d4d4d4">            </span><span style="color:#ffd700">[</span><span style="color:#ce9178">'resource/'</span><span style="color:#d4d4d4"> + </span><span style="color:#9cdcfe">package_name</span><span style="color:#ffd700">]</span><span style="color:#179fff">)</span><span style="color:#d4d4d4">,</span></div>
<div class="m" style="left:37.0px;top:86.05px;height:10.22px;line-height:10.22px;font-size:7.5px"><span style="color:#d4d4d4">        </span><span style="color:#179fff">(</span><span style="color:#ce9178">'share/'</span><span style="color:#d4d4d4"> + </span><span style="color:#9cdcfe">package_name</span><span style="color:#d4d4d4">, </span><span style="color:#ffd700">[</span><span style="color:#ce9178">'package.xml'</span><span style="color:#ffd700">]</span><span style="color:#179fff">)</span><span style="color:#d4d4d4">,</span></div>
<div class="m" style="left:37.0px;top:96.27px;height:10.22px;line-height:10.22px;font-size:7.5px"><span style="color:#d4d4d4">    </span><span style="color:#da70d6">]</span><span style="color:#d4d4d4">,</span></div>
<div class="m" style="left:37.0px;top:106.49px;height:10.22px;line-height:10.22px;font-size:7.5px"><span style="color:#9cdcfe">    install_requires</span><span style="color:#d4d4d4">=</span><span style="color:#da70d6">[</span><span style="color:#ce9178">'setuptools'</span><span style="color:#da70d6">]</span><span style="color:#d4d4d4">,</span></div>
<div class="m" style="left:37.0px;top:116.71px;height:10.22px;line-height:10.22px;font-size:7.5px"><span style="color:#9cdcfe">    zip_safe</span><span style="color:#d4d4d4">=</span><span style="color:#569cd6">True</span><span style="color:#d4d4d4">,</span></div>
<div class="m" style="left:37.0px;top:126.93px;height:10.22px;line-height:10.22px;font-size:7.5px"><span style="color:#9cdcfe">    maintainer</span><span style="color:#d4d4d4">=</span><span style="color:#ce9178">'root'</span><span style="color:#d4d4d4">,</span></div>
<div class="m" style="left:37.0px;top:137.15px;height:10.22px;line-height:10.22px;font-size:7.5px"><span style="color:#9cdcfe">    maintainer_email</span><span style="color:#d4d4d4">=</span><span style="color:#ce9178">'root@todo.todo'</span><span style="color:#d4d4d4">,</span></div>
<div class="m" style="left:37.0px;top:147.37px;height:10.22px;line-height:10.22px;font-size:7.5px"><span style="color:#9cdcfe">    description</span><span style="color:#d4d4d4">=</span><span style="color:#ce9178">'TODO: Package description'</span><span style="color:#d4d4d4">,</span></div>
<div class="m" style="left:37.0px;top:157.59px;height:10.22px;line-height:10.22px;font-size:7.5px"><span style="color:#9cdcfe">    license</span><span style="color:#d4d4d4">=</span><span style="color:#ce9178">'TODO: License declaration'</span><span style="color:#d4d4d4">,</span></div>
<div class="m" style="left:37.0px;top:167.81px;height:10.22px;line-height:10.22px;font-size:7.5px"><span style="color:#9cdcfe">    tests_require</span><span style="color:#d4d4d4">=</span><span style="color:#da70d6">[</span><span style="color:#ce9178">'pytest'</span><span style="color:#da70d6">]</span><span style="color:#d4d4d4">,</span></div>
<div class="m" style="left:37.0px;top:178.03px;height:10.22px;line-height:10.22px;font-size:7.5px"><span style="color:#9cdcfe">    entry_points</span><span style="color:#d4d4d4">=</span><span style="color:#da70d6">{</span></div>
<div class="m" style="left:37.0px;top:188.25px;height:10.22px;line-height:10.22px;font-size:7.5px"><span style="color:#d4d4d4">        </span><span style="color:#ce9178">'console_scripts'</span><span style="color:#d4d4d4">: </span><span style="color:#179fff">[</span></div>
<div class="m" style="left:37.0px;top:198.47px;height:10.22px;line-height:10.22px;font-size:7.5px"><span style="color:#d4d4d4">            </span><span style="color:#ce9178">'forward_once = motion_control_pkg.forward_once:main'</span><span style="color:#d4d4d4">,</span></div>
<div class="m" style="left:37.0px;top:208.69px;height:10.22px;line-height:10.22px;font-size:7.5px"><span style="color:#d4d4d4">        </span><span style="color:#179fff">]</span><span style="color:#d4d4d4">,</span></div>
<div class="m" style="left:37.0px;top:218.91px;height:10.22px;line-height:10.22px;font-size:7.5px"><span style="color:#d4d4d4">    </span><span style="color:#da70d6">}</span><span style="color:#d4d4d4">,</span></div>
<div class="m" style="left:37.0px;top:229.13px;height:10.22px;line-height:10.22px;font-size:7.5px"><span style="color:#ffd700">)</span></div>
<div class="m" style="left:37.0px;top:239.35px;height:10.22px;line-height:10.22px;font-size:7.5px"></div>
</div>
<div class="a" style="left:185px;top:65.5px;width:612px;height:3px;background:linear-gradient(#000000b0, #00000000);"></div>
<div class="a" style="left:797.5px;top:67.2px;width:2.12px;height:0.7px;background:#c586c0;opacity:0.28"></div>
<div class="a" style="left:800.15px;top:67.2px;width:5.300000000000001px;height:0.7px;background:#4ec9b0;opacity:0.28"></div>
<div class="a" style="left:805.98px;top:67.2px;width:3.18px;height:0.7px;background:#c586c0;opacity:0.28"></div>
<div class="a" style="left:809.69px;top:67.2px;width:6.890000000000001px;height:0.7px;background:#9cdcfe;opacity:0.28"></div>
<div class="a" style="left:816.58px;top:67.2px;width:0.53px;height:0.7px;background:#d4d4d4;opacity:0.28"></div>
<div class="a" style="left:817.64px;top:67.2px;width:2.6500000000000004px;height:0.7px;background:#dcdcaa;opacity:0.28"></div>
<div class="a" style="left:797.5px;top:69.3px;width:6.36px;height:0.7px;background:#9cdcfe;opacity:0.28"></div>
<div class="a" style="left:804.39px;top:69.3px;width:0.53px;height:0.7px;background:#d4d4d4;opacity:0.28"></div>
<div class="a" style="left:805.45px;top:69.3px;width:10.600000000000001px;height:0.7px;background:#ce9178;opacity:0.28"></div>
<div class="a" style="left:797.5px;top:71.4px;width:2.6500000000000004px;height:0.7px;background:#dcdcaa;opacity:0.28"></div>
<div class="a" style="left:800.15px;top:71.4px;width:0.53px;height:0.7px;background:#ffd700;opacity:0.28"></div>
<div class="a" style="left:799.62px;top:72.45px;width:2.12px;height:0.7px;background:#9cdcfe;opacity:0.28"></div>
<div class="a" style="left:801.74px;top:72.45px;width:0.53px;height:0.7px;background:#d4d4d4;opacity:0.28"></div>
<div class="a" style="left:802.27px;top:72.45px;width:6.36px;height:0.7px;background:#9cdcfe;opacity:0.28"></div>
<div class="a" style="left:808.63px;top:72.45px;width:0.53px;height:0.7px;background:#d4d4d4;opacity:0.28"></div>
<div class="a" style="left:799.62px;top:73.5px;width:3.71px;height:0.7px;background:#9cdcfe;opacity:0.28"></div>
<div class="a" style="left:803.33px;top:73.5px;width:0.53px;height:0.7px;background:#d4d4d4;opacity:0.28"></div>
<div class="a" style="left:803.86px;top:73.5px;width:3.71px;height:0.7px;background:#ce9178;opacity:0.28"></div>
<div class="a" style="left:807.57px;top:73.5px;width:0.53px;height:0.7px;background:#d4d4d4;opacity:0.28"></div>
<div class="a" style="left:799.62px;top:74.55px;width:4.24px;height:0.7px;background:#9cdcfe;opacity:0.28"></div>
<div class="a" style="left:803.86px;top:74.55px;width:0.53px;height:0.7px;background:#d4d4d4;opacity:0.28"></div>
<div class="a" style="left:804.39px;top:74.55px;width:6.890000000000001px;height:0.7px;background:#9cdcfe;opacity:0.28"></div>
<div class="a" style="left:811.28px;top:74.55px;width:0.53px;height:0.7px;background:#da70d6;opacity:0.28"></div>
<div class="a" style="left:811.81px;top:74.55px;width:3.71px;height:0.7px;background:#9cdcfe;opacity:0.28"></div>
<div class="a" style="left:815.52px;top:74.55px;width:0.53px;height:0.7px;background:#d4d4d4;opacity:0.28"></div>
<div class="a" style="left:816.05px;top:74.55px;width:0.53px;height:0.7px;background:#179fff;opacity:0.28"></div>
<div class="a" style="left:816.58px;top:74.55px;width:3.18px;height:0.7px;background:#ce9178;opacity:0.28"></div>
<div class="a" style="left:819.76px;top:74.55px;width:0.53px;height:0.7px;background:#179fff;opacity:0.28"></div>
<div class="a" style="left:820.29px;top:74.55px;width:0.53px;height:0.7px;background:#da70d6;opacity:0.28"></div>
<div class="a" style="left:820.82px;top:74.55px;width:0.53px;height:0.7px;background:#d4d4d4;opacity:0.28"></div>
<div class="a" style="left:799.62px;top:75.60000000000001px;width:5.300000000000001px;height:0.7px;background:#9cdcfe;opacity:0.28"></div>
<div class="a" style="left:804.92px;top:75.60000000000001px;width:0.53px;height:0.7px;background:#d4d4d4;opacity:0.28"></div>
<div class="a" style="left:805.45px;top:75.60000000000001px;width:0.53px;height:0.7px;background:#da70d6;opacity:0.28"></div>
<div class="a" style="left:801.74px;top:76.65px;width:0.53px;height:0.7px;background:#179fff;opacity:0.28"></div>
<div class="a" style="left:802.27px;top:76.65px;width:22.790000000000003px;height:0.7px;background:#ce9178;opacity:0.28"></div>
<div class="a" style="left:825.06px;top:76.65px;width:0.53px;height:0.7px;background:#d4d4d4;opacity:0.28"></div>
<div class="a" style="left:803.86px;top:77.7px;width:0.53px;height:0.7px;background:#ffd700;opacity:0.28"></div>
<div class="a" style="left:804.39px;top:77.7px;width:5.83px;height:0.7px;background:#ce9178;opacity:0.28"></div>
<div class="a" style="left:810.75px;top:77.7px;width:0.53px;height:0.7px;background:#d4d4d4;opacity:0.28"></div>
<div class="a" style="left:811.81px;top:77.7px;width:6.36px;height:0.7px;background:#9cdcfe;opacity:0.28"></div>
<div class="a" style="left:818.17px;top:77.7px;width:0.53px;height:0.7px;background:#ffd700;opacity:0.28"></div>
<div class="a" style="left:818.7px;top:77.7px;width:0.53px;height:0.7px;background:#179fff;opacity:0.28"></div>
<div class="a" style="left:819.23px;top:77.7px;width:0.53px;height:0.7px;background:#d4d4d4;opacity:0.28"></div>
<div class="a" style="left:801.74px;top:78.75px;width:0.53px;height:0.7px;background:#179fff;opacity:0.28"></div>
<div class="a" style="left:802.27px;top:78.75px;width:4.24px;height:0.7px;background:#ce9178;opacity:0.28"></div>
<div class="a" style="left:807.04px;top:78.75px;width:0.53px;height:0.7px;background:#d4d4d4;opacity:0.28"></div>
<div class="a" style="left:808.1px;top:78.75px;width:6.36px;height:0.7px;background:#9cdcfe;opacity:0.28"></div>
<div class="a" style="left:814.46px;top:78.75px;width:0.53px;height:0.7px;background:#d4d4d4;opacity:0.28"></div>
<div class="a" style="left:815.52px;top:78.75px;width:0.53px;height:0.7px;background:#ffd700;opacity:0.28"></div>
<div class="a" style="left:816.05px;top:78.75px;width:6.890000000000001px;height:0.7px;background:#ce9178;opacity:0.28"></div>
<div class="a" style="left:822.94px;top:78.75px;width:0.53px;height:0.7px;background:#ffd700;opacity:0.28"></div>
<div class="a" style="left:823.47px;top:78.75px;width:0.53px;height:0.7px;background:#179fff;opacity:0.28"></div>
<div class="a" style="left:824.0px;top:78.75px;width:0.53px;height:0.7px;background:#d4d4d4;opacity:0.28"></div>
<div class="a" style="left:799.62px;top:79.80000000000001px;width:0.53px;height:0.7px;background:#da70d6;opacity:0.28"></div>
<div class="a" style="left:800.15px;top:79.80000000000001px;width:0.53px;height:0.7px;background:#d4d4d4;opacity:0.28"></div>
<div class="a" style="left:799.62px;top:80.85000000000001px;width:8.48px;height:0.7px;background:#9cdcfe;opacity:0.28"></div>
<div class="a" style="left:808.1px;top:80.85000000000001px;width:0.53px;height:0.7px;background:#d4d4d4;opacity:0.28"></div>
<div class="a" style="left:808.63px;top:80.85000000000001px;width:0.53px;height:0.7px;background:#da70d6;opacity:0.28"></div>
<div class="a" style="left:809.16px;top:80.85000000000001px;width:6.36px;height:0.7px;background:#ce9178;opacity:0.28"></div>
<div class="a" style="left:815.52px;top:80.85000000000001px;width:0.53px;height:0.7px;background:#da70d6;opacity:0.28"></div>
<div class="a" style="left:816.05px;top:80.85000000000001px;width:0.53px;height:0.7px;background:#d4d4d4;opacity:0.28"></div>
<div class="a" style="left:799.62px;top:81.9px;width:4.24px;height:0.7px;background:#9cdcfe;opacity:0.28"></div>
<div class="a" style="left:803.86px;top:81.9px;width:0.53px;height:0.7px;background:#d4d4d4;opacity:0.28"></div>
<div class="a" style="left:804.39px;top:81.9px;width:2.12px;height:0.7px;background:#569cd6;opacity:0.28"></div>
<div class="a" style="left:806.51px;top:81.9px;width:0.53px;height:0.7px;background:#d4d4d4;opacity:0.28"></div>
<div class="a" style="left:799.62px;top:82.95px;width:5.300000000000001px;height:0.7px;background:#9cdcfe;opacity:0.28"></div>
<div class="a" style="left:804.92px;top:82.95px;width:0.53px;height:0.7px;background:#d4d4d4;opacity:0.28"></div>
<div class="a" style="left:805.45px;top:82.95px;width:3.18px;height:0.7px;background:#ce9178;opacity:0.28"></div>
<div class="a" style="left:808.63px;top:82.95px;width:0.53px;height:0.7px;background:#d4d4d4;opacity:0.28"></div>
<div class="a" style="left:799.62px;top:84.0px;width:8.48px;height:0.7px;background:#9cdcfe;opacity:0.28"></div>
<div class="a" style="left:808.1px;top:84.0px;width:0.53px;height:0.7px;background:#d4d4d4;opacity:0.28"></div>
<div class="a" style="left:808.63px;top:84.0px;width:8.48px;height:0.7px;background:#ce9178;opacity:0.28"></div>
<div class="a" style="left:817.11px;top:84.0px;width:0.53px;height:0.7px;background:#d4d4d4;opacity:0.28"></div>
<div class="a" style="left:799.62px;top:85.05000000000001px;width:5.83px;height:0.7px;background:#9cdcfe;opacity:0.28"></div>
<div class="a" style="left:805.45px;top:85.05000000000001px;width:0.53px;height:0.7px;background:#d4d4d4;opacity:0.28"></div>
<div class="a" style="left:805.98px;top:85.05000000000001px;width:3.18px;height:0.7px;background:#ce9178;opacity:0.28"></div>
<div class="a" style="left:809.69px;top:85.05000000000001px;width:3.71px;height:0.7px;background:#ce9178;opacity:0.28"></div>
<div class="a" style="left:813.93px;top:85.05000000000001px;width:6.36px;height:0.7px;background:#ce9178;opacity:0.28"></div>
<div class="a" style="left:820.29px;top:85.05000000000001px;width:0.53px;height:0.7px;background:#d4d4d4;opacity:0.28"></div>
<div class="a" style="left:799.62px;top:86.10000000000001px;width:3.71px;height:0.7px;background:#9cdcfe;opacity:0.28"></div>
<div class="a" style="left:803.33px;top:86.10000000000001px;width:0.53px;height:0.7px;background:#d4d4d4;opacity:0.28"></div>
<div class="a" style="left:803.86px;top:86.10000000000001px;width:3.18px;height:0.7px;background:#ce9178;opacity:0.28"></div>
<div class="a" style="left:807.57px;top:86.10000000000001px;width:3.71px;height:0.7px;background:#ce9178;opacity:0.28"></div>
<div class="a" style="left:811.81px;top:86.10000000000001px;width:6.36px;height:0.7px;background:#ce9178;opacity:0.28"></div>
<div class="a" style="left:818.17px;top:86.10000000000001px;width:0.53px;height:0.7px;background:#d4d4d4;opacity:0.28"></div>
<div class="a" style="left:799.62px;top:87.15px;width:6.890000000000001px;height:0.7px;background:#9cdcfe;opacity:0.28"></div>
<div class="a" style="left:806.51px;top:87.15px;width:0.53px;height:0.7px;background:#d4d4d4;opacity:0.28"></div>
<div class="a" style="left:807.04px;top:87.15px;width:0.53px;height:0.7px;background:#da70d6;opacity:0.28"></div>
<div class="a" style="left:807.57px;top:87.15px;width:4.24px;height:0.7px;background:#ce9178;opacity:0.28"></div>
<div class="a" style="left:811.81px;top:87.15px;width:0.53px;height:0.7px;background:#da70d6;opacity:0.28"></div>
<div class="a" style="left:812.34px;top:87.15px;width:0.53px;height:0.7px;background:#d4d4d4;opacity:0.28"></div>
<div class="a" style="left:799.62px;top:88.2px;width:6.36px;height:0.7px;background:#9cdcfe;opacity:0.28"></div>
<div class="a" style="left:805.98px;top:88.2px;width:0.53px;height:0.7px;background:#d4d4d4;opacity:0.28"></div>
<div class="a" style="left:806.51px;top:88.2px;width:0.53px;height:0.7px;background:#da70d6;opacity:0.28"></div>
<div class="a" style="left:801.74px;top:89.25px;width:9.01px;height:0.7px;background:#ce9178;opacity:0.28"></div>
<div class="a" style="left:810.75px;top:89.25px;width:0.53px;height:0.7px;background:#d4d4d4;opacity:0.28"></div>
<div class="a" style="left:811.81px;top:89.25px;width:0.53px;height:0.7px;background:#179fff;opacity:0.28"></div>
<div class="a" style="left:803.86px;top:90.30000000000001px;width:6.890000000000001px;height:0.7px;background:#ce9178;opacity:0.28"></div>
<div class="a" style="left:811.28px;top:90.30000000000001px;width:0.53px;height:0.7px;background:#ce9178;opacity:0.28"></div>
<div class="a" style="left:812.34px;top:90.30000000000001px;width:19.61px;height:0.7px;background:#ce9178;opacity:0.28"></div>
<div class="a" style="left:831.95px;top:90.30000000000001px;width:0.53px;height:0.7px;background:#d4d4d4;opacity:0.28"></div>
<div class="a" style="left:801.74px;top:91.35000000000001px;width:0.53px;height:0.7px;background:#179fff;opacity:0.28"></div>
<div class="a" style="left:802.27px;top:91.35000000000001px;width:0.53px;height:0.7px;background:#d4d4d4;opacity:0.28"></div>
<div class="a" style="left:799.62px;top:92.4px;width:0.53px;height:0.7px;background:#da70d6;opacity:0.28"></div>
<div class="a" style="left:800.15px;top:92.4px;width:0.53px;height:0.7px;background:#d4d4d4;opacity:0.28"></div>
<div class="a" style="left:797.5px;top:93.45px;width:0.53px;height:0.7px;background:#ffd700;opacity:0.28"></div>
<div class="a" style="left:857.4px;top:66.5px;width:7.6px;height:375.5px;background:#212121;border-left:0.8px solid #191919"></div>
<div class="a" style="left:858px;top:197px;width:7px;height:1.5px;background:#6e6e6e;"></div>
<div class="a" style="left:857.4px;top:66.6px;width:7.6px;height:0.9px;background:#191919;"></div>
<div class="t" style="left:194.6px;top:448.77px;height:8.26px;line-height:8.26px;font-size:5.9px;color:#9d9d9d;">問題</div>
<div class="t" style="left:219px;top:448.77px;height:8.26px;line-height:8.26px;font-size:5.9px;color:#9d9d9d;">出力</div>
<div class="t" style="left:244px;top:448.77px;height:8.26px;line-height:8.26px;font-size:5.9px;color:#9d9d9d;">デバッグ コンソール</div>
<div class="t" style="left:311px;top:448.77px;height:8.26px;line-height:8.26px;font-size:5.9px;color:#e7e7e7;font-weight:bold">ターミナル</div>
<div class="t" style="left:354px;top:448.77px;height:8.26px;line-height:8.26px;font-size:5.9px;color:#9d9d9d;">ポート</div>
<div class="a" style="left:310.5px;top:457.6px;width:32px;height:0.9px;background:#0078d4;"></div>
<div class="a" style="left:374px;top:448.2px;width:8.6px;height:8.6px;background:#0078d4;border-radius:50%"></div>
<div class="t" style="left:374.2px;top:448.26px;height:8.68px;line-height:8.68px;font-size:6.2px;color:#fff;width:8.6px;text-align:center">3</div>
<svg class="a" style="left:187.8px;top:467px;" width="4" height="4" viewBox="0 0 4 4"><circle cx="2" cy="2" r="1.5" fill="none" stroke="#8a8a8a" stroke-width="0.6"/></svg>
<div class="m" style="left:195px;top:464.8px;height:9px;line-height:9px;font-size:7.5px;color:#cccccc">root@raspberrypi:~#</div>
<svg class="a" style="left:736px;top:448.5px;" width="8" height="8" viewBox="0 0 8 8"><circle cx="4" cy="4" r="3.5" fill="none" stroke="#8a8a8a" stroke-width="0.6"/><path d="M4.2 3.2L7 2.2V6L4.2 7.2Z" fill="#d0d0d0"/></svg>
<div class="t" style="left:747px;top:448.10px;height:8.40px;line-height:8.40px;font-size:6.0px;color:#9d9d9d;">bash</div>
<svg class="a" style="left:764.5px;top:448.5px;" width="8" height="8" viewBox="0 0 8 8"><path d="M4 0.5V7.5M0.5 4H7.5" stroke="#c5c5c5" stroke-width="0.8"/></svg>
<svg class="a" style="left:775.5px;top:451px;" width="5" height="3.5" viewBox="0 0 5 3.5"><path d="M0.5 0.8L2.5 2.8L4.5 0.8" stroke="#aaa" stroke-width="0.7" fill="none"/></svg>
<svg class="a" style="left:786px;top:448.5px;" width="8.5" height="8" viewBox="0 0 8.5 8"><rect x="0.5" y="0.5" width="7.5" height="7" rx="0.8" fill="none" stroke="#c5c5c5" stroke-width="0.8"/><path d="M4.25 0.5V7.5" stroke="#c5c5c5" stroke-width="0.8"/></svg>
<svg class="a" style="left:799.5px;top:448px;" width="8" height="9" viewBox="0 0 8 9"><path d="M0.5 1.8H7.5M2.8 1.8V0.6H5.2V1.8M1.4 1.8L1.9 8.4H6.1L6.6 1.8" fill="none" stroke="#c5c5c5" stroke-width="0.75"/><path d="M3.4 3.6V6.8M4.6 3.6V6.8" stroke="#c5c5c5" stroke-width="0.5"/></svg>
<svg class="a" style="left:814px;top:451.2px;" width="8" height="2.5" viewBox="0 0 8 2.5"><circle cx="1.2" cy="1.2" r="0.6" fill="#ccc"/><circle cx="4" cy="1.2" r="0.6" fill="#ccc"/><circle cx="6.8" cy="1.2" r="0.6" fill="#ccc"/></svg>
<div class="a" style="left:828px;top:448px;width:0.8px;height:9px;background:#3c3c3c;"></div>
<svg class="a" style="left:835px;top:448.5px;" width="8" height="8" viewBox="0 0 8 8"><path d="M0.5 2.5V0.5H2.5M5.5 0.5H7.5V2.5M7.5 5.5V7.5H5.5M2.5 7.5H0.5V5.5" fill="none" stroke="#c5c5c5" stroke-width="0.8"/></svg>
<svg class="a" style="left:849px;top:449px;" width="7" height="7" viewBox="0 0 7 7"><path d="M0.5 0.5L6.5 6.5M6.5 0.5L0.5 6.5" stroke="#c5c5c5" stroke-width="0.8"/></svg>
<div class="a" style="left:857.6px;top:468px;width:0.9px;height:96px;background:#101010;"></div>
<div class="a" style="left:860px;top:464.3px;width:5px;height:0.8px;background:#141414;"></div>
<div class="a" style="left:858px;top:464.3px;width:2px;height:3.6px;background:#6a6a6a;border-radius:0.5px"></div>
<div class="t" style="left:875.5px;top:41.57px;height:8.26px;line-height:8.26px;font-size:5.9px;color:#e7e7e7;font-weight:bold">チャット</div>
<div class="a" style="left:875px;top:50.7px;width:25px;height:0.9px;background:#0078d4;"></div>
<svg class="a" style="left:931.5px;top:42px;" width="7" height="7" viewBox="0 0 7 7"><path d="M3.5 0.3V6.7M0.3 3.5H6.7" stroke="#c5c5c5" stroke-width="0.8"/></svg>
<svg class="a" style="left:946px;top:42px;" width="8.5" height="8.5" viewBox="0 0 8.5 8.5"><path d="M1.6 2.4A3.5 3.5 0 1 1 0.9 4.6" fill="none" stroke="#c5c5c5" stroke-width="0.8"/><path d="M0.8 0.8V2.8H2.8" fill="none" stroke="#c5c5c5" stroke-width="0.7"/><path d="M4.4 2.4V4.6L5.8 5.6" fill="none" stroke="#c5c5c5" stroke-width="0.7"/></svg>
<svg class="a" style="left:960px;top:42px;" width="8.5" height="8.5" viewBox="0 0 14 14"><g fill="none" stroke="#c5c5c5" stroke-width="0.9"><circle cx="7" cy="7" r="1.8"/><path d="M6 0.9H8L8.4 2.5L9.6 3.1L11.1 2.3L12.5 3.7L11.7 5.2L12.2 6.4L13.8 6.8V8.8L12.2 9.2L11.7 10.4L12.5 11.9L11.1 13.3L9.6 12.5L8.4 13.1L8 14.7H6L5.6 13.1L4.4 12.5L2.9 13.3L1.5 11.9L2.3 10.4L1.8 9.2L0.2 8.8V6.8L1.8 6.4L2.3 5.2L1.5 3.7L2.9 2.3L4.4 3.1L5.6 2.5Z" transform="translate(0,-0.8)"/></g></svg>
<svg class="a" style="left:974px;top:45.2px;" width="8" height="2.5" viewBox="0 0 8 2.5"><circle cx="1.2" cy="1.2" r="0.6" fill="#ccc"/><circle cx="4" cy="1.2" r="0.6" fill="#ccc"/><circle cx="6.8" cy="1.2" r="0.6" fill="#ccc"/></svg>
<div class="a" style="left:988.3px;top:41.5px;width:0.8px;height:9px;background:#3c3c3c;"></div>
<svg class="a" style="left:995px;top:42px;" width="8" height="8" viewBox="0 0 8 8"><path d="M0.5 2.5V0.5H2.5M5.5 0.5H7.5V2.5M7.5 5.5V7.5H5.5M2.5 7.5H0.5V5.5" fill="none" stroke="#c5c5c5" stroke-width="0.8"/></svg>
<svg class="a" style="left:1010px;top:42.5px;" width="6.5" height="6.5" viewBox="0 0 6.5 6.5"><path d="M0.5 0.5L6 6M6 0.5L0.5 6" stroke="#c5c5c5" stroke-width="0.8"/></svg>
<svg class="a" style="left:935.5px;top:174.5px;" width="21" height="20.5" viewBox="0 0 21 20.5"><path d="M8.5 2H1V13.3H4V18.5L9 13.3H12" fill="none" stroke="#c8c8c8" stroke-width="1.2"/><path d="M13 0.5L14.3 4.2L18 5.5L14.3 6.8L13 10.5L11.7 6.8L8 5.5L11.7 4.2Z" fill="#c8c8c8"/><path d="M17.5 9.5L18.4 11.6L20.5 12.5L18.4 13.4L17.5 15.5L16.6 13.4L14.5 12.5L16.6 11.6Z" fill="#c8c8c8"/></svg>
<div class="t" style="left:866px;width:158px;text-align:center;top:203px;height:19px;line-height:19px;font-size:12.6px;color:#c0c0c0">Copilot <span style="-webkit-text-stroke:0.25px #c0c0c0">へようこそ</span></div>
<div class="t" style="left:866px;width:158px;text-align:center;top:228px;height:11px;line-height:11px;font-size:8.4px;color:#c8c8c8;letter-spacing:0.35px;text-indent:0.35px;-webkit-text-stroke:0.2px #c8c8c8">始めましょう</div>
<div class="a" style="left:873.8px;top:271px;width:143px;height:35.5px;background:#2e2e2e;border-radius:3px;border:0.7px solid #303030"></div>
<div class="t" style="left:878px;top:276.46px;height:10.08px;line-height:10.08px;font-size:7.2px;color:#9a9a9a;width:135px;overflow:hidden">コンテキスト (#)、拡張機能 (@)、コマンド</div>
<svg class="a" style="left:1002.5px;top:292.5px;" width="9" height="8.5" viewBox="0 0 9 8.5"><path d="M0.8 0.8L8.2 4.25L0.8 7.7L2.2 4.25Z" fill="none" stroke="#b0b0b0" stroke-width="0.75"/><path d="M2.2 4.25H5.5" stroke="#b0b0b0" stroke-width="0.6"/></svg>
<div class="a" style="left:899px;top:319px;width:92.4px;height:14.2px;background:#242424;border-radius:2.5px;border:0.7px solid #2d2d2d"></div>
<div class="t" style="left:899px;width:92.4px;text-align:center;top:319px;height:14.2px;line-height:14.2px;font-size:7.2px;letter-spacing:0.4px;color:#e0e0e0;font-weight:bold">ワークスペースのビルド</div>
<div class="a" style="left:922px;top:337.4px;width:46.7px;height:13.8px;background:#242424;border-radius:2.5px;border:0.7px solid #2d2d2d"></div>
<div class="t" style="left:922px;width:46.7px;text-align:center;top:337.4px;height:13.8px;line-height:13.8px;font-size:7.2px;letter-spacing:0.4px;color:#e0e0e0;font-weight:bold">構成を表示</div>
<div class="t" style="left:866px;width:158px;text-align:center;top:382px;height:10px;line-height:10px;font-size:6.45px;color:#969696;letter-spacing:0.15px">AI の応答が不正確である可能性があります。</div>
<svg class="a" style="left:4.6px;top:566.6px;" width="6" height="8" viewBox="0 0 6 8"><path d="M5.4 0.8L2.6 3.4L4.8 5.2M0.6 2.6L3 4.8L0.8 7.4" stroke="#e8f2fb" stroke-width="0.8" fill="none"/></svg>
<div class="t" style="left:13.3px;top:567.02px;height:8.96px;line-height:8.96px;font-size:6.4px;color:#ffffff;letter-spacing:0.05px"><span style="-webkit-text-stroke:0.2px #fff">コンテナー</span> yahboomtechnology/ros-humble:3.6 (...</div>
<svg class="a" style="left:166.8px;top:567.3px;" width="7.5" height="7" viewBox="0 0 7.5 7"><rect x="0.7" y="0.6" width="5.6" height="4.6" fill="none" stroke="#bdbdbd" stroke-width="0.7"/><path d="M2 6.4H5" stroke="#bdbdbd" stroke-width="0.7"/><rect x="2.2" y="1.8" width="2.6" height="2.2" fill="#bdbdbd"/></svg>
<div class="t" style="left:175px;top:567.02px;height:8.96px;line-height:8.96px;font-size:6.4px;color:#bdbdbd;">YDLidar-SDK</div>
<svg class="a" style="left:214.5px;top:566.5px;" width="7" height="8" viewBox="0 0 7 8"><circle cx="1.6" cy="1.6" r="1.1" fill="none" stroke="#bdbdbd" stroke-width="0.6"/><circle cx="5.4" cy="2.4" r="1.1" fill="none" stroke="#bdbdbd" stroke-width="0.6"/><path d="M1.6 2.7V8M5.4 3.5Q5.4 5.4 1.6 6.2" fill="none" stroke="#bdbdbd" stroke-width="0.6"/></svg>
<div class="t" style="left:223px;top:567.02px;height:8.96px;line-height:8.96px;font-size:6.4px;color:#bdbdbd;">master*</div>
<svg class="a" style="left:250.5px;top:567px;" width="7" height="7" viewBox="0 0 7 7"><path d="M1 3.5A2.5 2.5 0 0 1 5.6 2.1M6 3.5A2.5 2.5 0 0 1 1.4 4.9" fill="none" stroke="#bdbdbd" stroke-width="0.7"/><path d="M5.8 0.6V2.4H4M1.2 6.4V4.6H3" fill="none" stroke="#bdbdbd" stroke-width="0.6"/></svg>
<svg class="a" style="left:265.5px;top:567px;" width="7" height="7" viewBox="0 0 7 7"><circle cx="3.5" cy="3.5" r="2.9" fill="none" stroke="#bdbdbd" stroke-width="0.65"/><path d="M2.2 2.2L4.8 4.8M4.8 2.2L2.2 4.8" stroke="#bdbdbd" stroke-width="0.6"/></svg>
<div class="t" style="left:273.8px;top:567.02px;height:8.96px;line-height:8.96px;font-size:6.4px;color:#bdbdbd;">0</div>
<svg class="a" style="left:282.5px;top:566.8px;" width="7.5" height="7" viewBox="0 0 7.5 7"><path d="M3.75 0.6L7 6.4H0.5Z" fill="none" stroke="#bdbdbd" stroke-width="0.65"/><path d="M3.75 2.6V4.6M3.75 5.2V5.8" stroke="#bdbdbd" stroke-width="0.6"/></svg>
<div class="t" style="left:291px;top:567.02px;height:8.96px;line-height:8.96px;font-size:6.4px;color:#bdbdbd;">0</div>
<svg class="a" style="left:303.5px;top:566.8px;" width="8" height="7" viewBox="0 0 8 7"><path d="M0.8 0.8L2.4 6.2L4 2.4L5.6 6.2L7.2 0.8" fill="none" stroke="#bdbdbd" stroke-width="0.75"/></svg>
<div class="t" style="left:312px;top:567.02px;height:8.96px;line-height:8.96px;font-size:6.4px;color:#bdbdbd;">3</div>
<div class="t" style="left:798px;top:567.02px;height:8.96px;line-height:8.96px;font-size:6.4px;color:#bdbdbd;">行 23、列 11</div>
<div class="t" style="left:843px;top:567.02px;height:8.96px;line-height:8.96px;font-size:6.4px;color:#bdbdbd;">スペース: 4</div>
<div class="t" style="left:883px;top:567.02px;height:8.96px;line-height:8.96px;font-size:6.4px;color:#bdbdbd;">UTF-8</div>
<div class="t" style="left:909px;top:567.02px;height:8.96px;line-height:8.96px;font-size:6.4px;color:#bdbdbd;">LF</div>
<div class="t" style="left:925px;top:567.02px;height:8.96px;line-height:8.96px;font-size:6.4px;color:#bdbdbd;">{ } Python</div>
<div class="t" style="left:979px;top:567.02px;height:8.96px;line-height:8.96px;font-size:6.4px;color:#bdbdbd;">3.10.12</div>
<svg class="a" style="left:962.5px;top:567px;" width="8" height="7" viewBox="0 0 8 7"><path d="M1.5 2.2Q1.5 0.8 4 0.8Q6.5 0.8 6.5 2.2L7.3 4.4Q7.3 6.6 4 6.6Q0.7 6.6 0.7 4.4Z" fill="#bdbdbd"/><circle cx="2.9" cy="4" r="0.7" fill="#181818"/><circle cx="5.1" cy="4" r="0.7" fill="#181818"/></svg>
<svg class="a" style="left:1009.5px;top:566.5px;" width="7" height="8" viewBox="0 0 7 8"><path d="M1 5.6V3.4Q1 1 3.5 1Q6 1 6 3.4V5.6L6.8 6.4H0.2Z" fill="none" stroke="#bdbdbd" stroke-width="0.7"/><circle cx="5.6" cy="1.8" r="1.4" fill="#bdbdbd"/></svg>
</div></body></html>
